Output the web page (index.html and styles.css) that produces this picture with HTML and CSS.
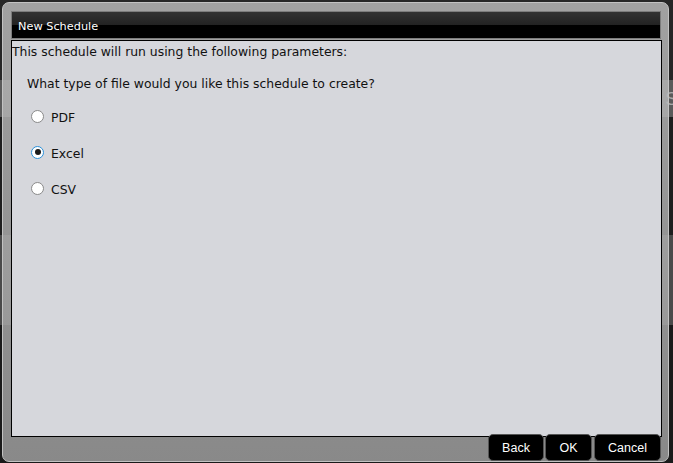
FILE: index.html
```html
<!DOCTYPE html>
<html lang="en">
<head>
  <meta charset="UTF-8">
  <title>New Schedule</title>
  <link rel="stylesheet" href="styles.css">
</head>
<body>

  <!-- page behind the dialog -->
  <div class="backdrop">
    <div class="band band-top"></div>
    <div class="band band-light"><span class="peek">S</span></div>
    <div class="band band-dark"></div>
    <div class="band band-mid"></div>
    <div class="band band-bottom"></div>
  </div>

  <div class="dialog">
    <div class="title-bar">New Schedule</div>

    <div class="panel">
      <div class="intro">This schedule will run using the following parameters:</div>
      <div class="question">What type of file would you like this schedule to create?</div>

      <div class="options">
        <label class="option"><input type="radio" name="fileType" value="pdf"> <span>PDF</span></label>
        <label class="option"><input type="radio" name="fileType" value="excel" checked> <span>Excel</span></label>
        <label class="option"><input type="radio" name="fileType" value="csv"> <span>CSV</span></label>
      </div>
    </div>

    <div class="dialog-buttons">
      <button class="back-btn">Back</button>
      <button class="ok-btn">OK</button>
      <button class="cancel-btn">Cancel</button>
    </div>
  </div>

</body>
</html>
```

FILE: styles.css
```css
body {
  margin: 0;
  width: 673px;
  height: 463px;
  overflow: hidden;
  position: relative;
  background-color: #1c1c1c;
  font-family: "DejaVu Sans", Verdana, sans-serif;
}

.backdrop {
  display: flex;
  flex-direction: column;
  height: 100%;
}

.band-top {
  height: 80px;
  background-color: #262626;
}

.band-light {
  height: 37px;
  background-color: #5a5a5a;
  display: flex;
  justify-content: flex-end;
  align-items: center;
}

.peek {
  color: #a8a8a8;
  font-family: "Liberation Sans", Arial, sans-serif;
  font-size: 19px;
  margin-right: -5px;
}

.band-dark {
  height: 118px;
  background-color: #1e1e1e;
}

.band-mid {
  height: 90px;
  background-color: #4a4a4a;
}

.band-bottom {
  flex: 1;
  background-color: #1a1a1a;
}

.dialog {
  position: absolute;
  top: 2px;
  left: 2px;
  width: 651px;
  height: 450px;
  border: 1px solid #c2c2c2;
  border-radius: 7px;
  background: linear-gradient(rgba(192, 192, 192, 0.8), rgba(165, 165, 165, 0.8));
  padding: 8px 6px 0 8px;
  display: flex;
  flex-direction: column;
}

.dialog > * {
  flex-shrink: 0;
}

.title-bar {
  height: 26px;
  border: 1px solid #7c7c7c;
  background: linear-gradient(#323232 0%, #222 50%, #000 50%, #000 100%);
  color: white;
  font-size: 11.3px;
  line-height: 30px;
  padding-left: 6px;
  margin-right: 1px;
}

.panel {
  height: 393px;
  margin-top: 1px;
  padding-top: 2px;
  background-color: #d6d7dc;
  border: 1px solid #000;
  font-size: 12.4px;
  color: #111;
}

.intro {
  line-height: 18px;
}

.question {
  line-height: 18px;
  margin: 14px 0 0 15px;
}

.options {
  display: flex;
  flex-direction: column;
  gap: 16px;
  margin: 13px 0 0 19px;
}

.option {
  display: flex;
  align-items: center;
  gap: 7px;
  height: 20px;
}

.option span {
  padding-top: 2px;
}

.option input {
  appearance: none;
  -webkit-appearance: none;
  margin: 0;
  width: 13px;
  height: 13px;
  border-radius: 50%;
  border: 1px solid #8a8a8a;
  background-color: white;
  box-sizing: border-box;
  display: grid;
  place-items: center;
}

.option input:checked {
  border-color: #2a8fd8;
}

.option input:checked::after {
  content: "";
  width: 6px;
  height: 6px;
  border-radius: 50%;
  background-color: #1a1a1a;
}

.dialog-buttons {
  display: flex;
  justify-content: flex-end;
  gap: 1px;
  margin-top: -3px;
  padding-right: 1px;
}

.dialog-buttons button {
  height: 27px;
  background-color: #000;
  color: white;
  border: 1px solid #555;
  border-radius: 5px;
  font-family: "Liberation Sans", Arial, sans-serif;
  font-size: 12.5px;
  padding: 0;
  cursor: pointer;
}

.back-btn {
  width: 56px;
}

.ok-btn {
  width: 47px;
}

.cancel-btn {
  width: 67px;
  margin-left: 1px;
}
```
